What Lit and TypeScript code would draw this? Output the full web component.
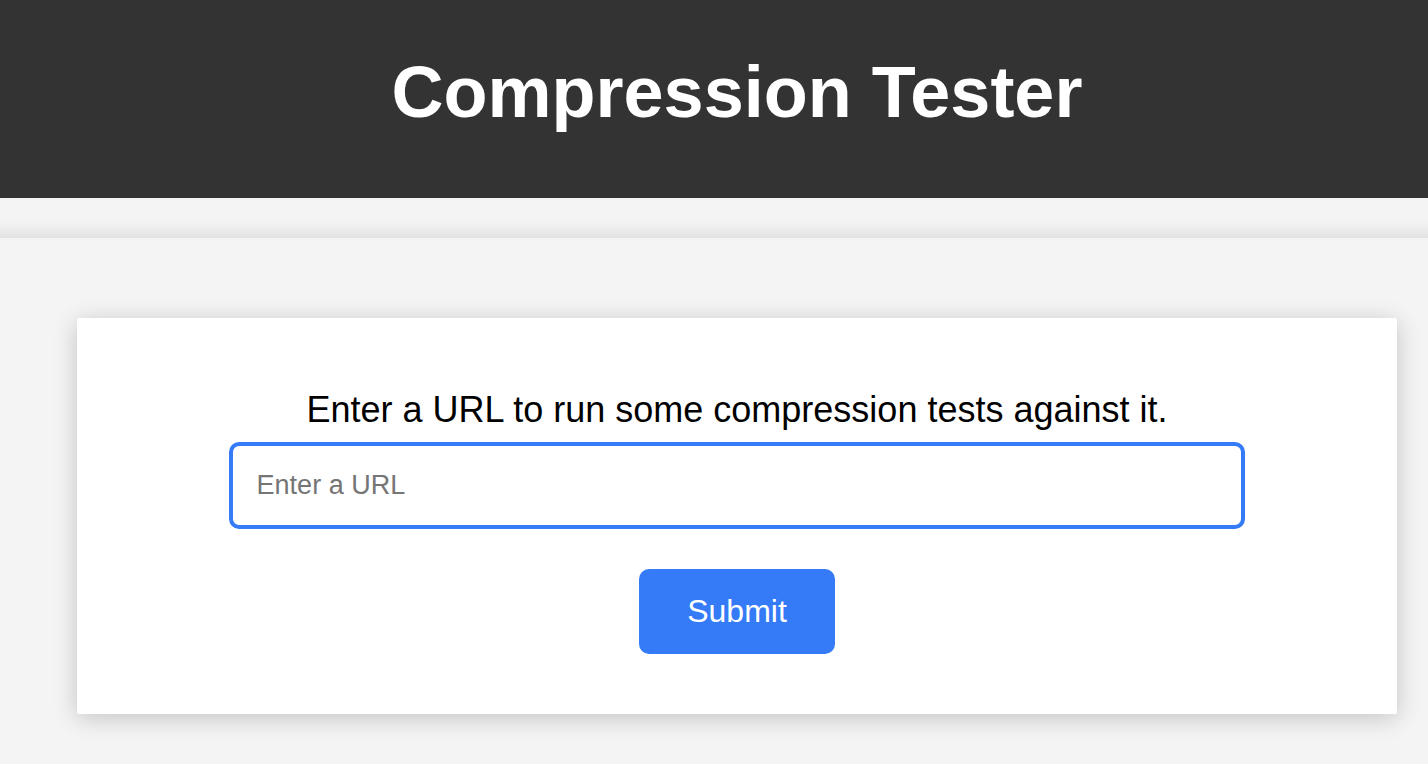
import { LitElement, html, css } from "lit";
import { customElement } from "lit/decorators.js";

@customElement("app-root")
export class AppRoot extends LitElement {
  static styles = css`
    :host {
      display: block;
      min-height: 100vh;
      overflow: hidden;
      background: #f4f4f4;
      color: #000;
      font-family: "Liberation Sans", Arial, sans-serif;
      --accent: #357af6;
      --shadow: 0 4px 24px rgba(0, 0, 0, 0.2);
    }
    header {
      padding: 52px 20px 66px 66px;
      background: #333;
      color: #fff;
      text-align: center;
    }
    h1 {
      margin: 0;
      font-size: 72px;
      line-height: 80px;
    }
    .divider {
      overflow: hidden;
      padding-top: 40px;
      height: 0;
    }
    .edge {
      height: 80px;
      margin: 0 -40px;
      box-shadow: var(--shadow);
    }
    main {
      padding: 80px 31px 50px 77px;
    }
    .card {
      display: flex;
      flex-direction: column;
      align-items: center;
      padding: 70px 40px 60px;
      border-radius: 2px;
      background: #fff;
      box-shadow: var(--shadow);
    }
    label {
      font-size: 36px;
      line-height: 44px;
      text-align: center;
    }
    input {
      box-sizing: border-box;
      width: 82%;
      height: 87px;
      margin: 10px 0 40px;
      padding: 0 24px;
      border: 4px solid var(--accent);
      border-radius: 10px;
      outline: none;
      background: #fff;
      font: 27px "Liberation Sans", Arial, sans-serif;
    }
    input::placeholder {
      color: #757575;
    }
    button {
      height: 85px;
      padding: 0 48px;
      border: 0;
      border-radius: 10px;
      background: var(--accent);
      color: #fff;
      font: 32px "Liberation Sans", Arial, sans-serif;
    }
  `;

  render() {
    return html`
      <header><h1>Compression Tester</h1></header>
      <div class="divider"><div class="edge"></div></div>
      <main>
        <form class="card" @submit=${(e: Event) => e.preventDefault()}>
          <label for="url">Enter a URL to run some compression tests against it.</label>
          <input id="url" type="text" placeholder="Enter a URL" />
          <button type="submit">Submit</button>
        </form>
      </main>
    `;
  }
}
